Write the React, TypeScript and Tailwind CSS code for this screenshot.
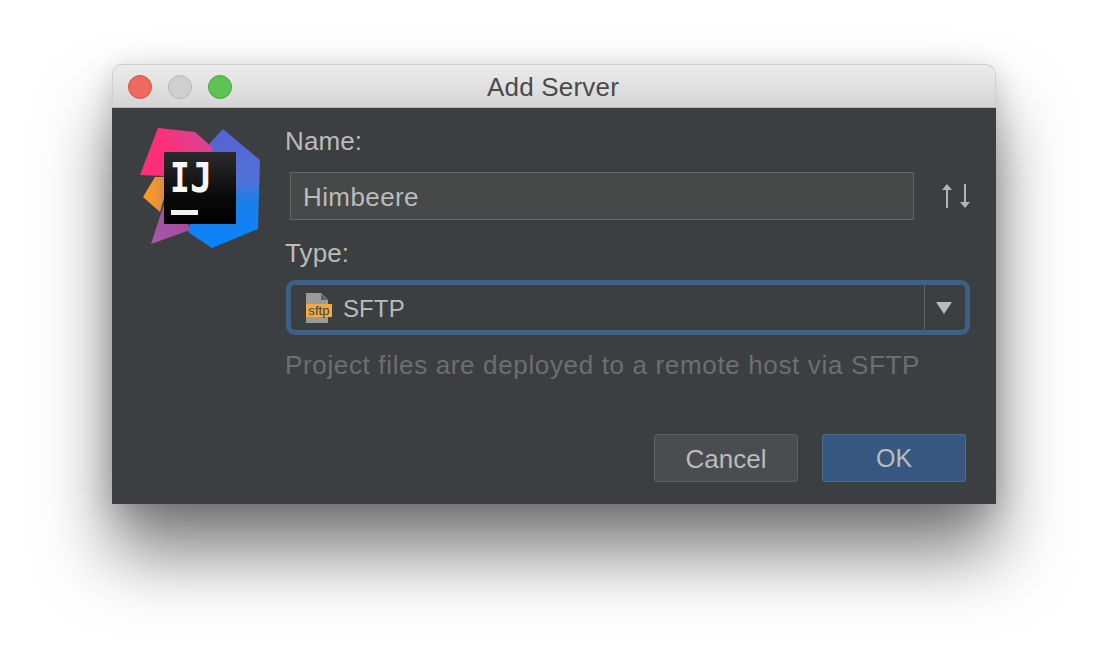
function ProductLogo() {
  return (
    <svg width="121" height="121" viewBox="0 0 121 121" className="shrink-0">
      <defs>
        <linearGradient id="pink" x1="0" y1="0.6" x2="1" y2="0.2">
          <stop offset="0.35" stopColor="#fe2f78" />
          <stop offset="1" stopColor="#d1499a" />
        </linearGradient>
        <linearGradient id="blue" x1="0.5" y1="0" x2="0.5" y2="1">
          <stop offset="0" stopColor="#5763d3" />
          <stop offset="0.45" stopColor="#4f72d8" />
          <stop offset="0.6" stopColor="#1c7fea" />
          <stop offset="1" stopColor="#0a83fb" />
        </linearGradient>
        <linearGradient id="purple" x1="0.2" y1="1" x2="0.8" y2="0">
          <stop offset="0" stopColor="#a65ba8" />
          <stop offset="1" stopColor="#a5409b" />
        </linearGradient>
        <linearGradient id="orange" x1="0" y1="0.5" x2="1" y2="0.5">
          <stop offset="0.2" stopColor="#fd9a24" />
          <stop offset="1" stopColor="#c9865a" />
        </linearGradient>
        <linearGradient id="tile" x1="0" y1="0" x2="0" y2="1">
          <stop offset="0" stopColor="#2b2b2b" />
          <stop offset="0.6" stopColor="#0a0a0a" />
          <stop offset="1" stopColor="#000000" />
        </linearGradient>
      </defs>
      <polygon points="83,1 120,32 118,101 72,120 48,104 70,15" fill="url(#blue)" />
      <polygon points="15,49 3,69 20,84 30,49" fill="url(#orange)" />
      <polygon points="23,79 11,116 50,102 40,70" fill="url(#purple)" />
      <polygon points="18,0 55,4 73,20 60,40 24,48 0,47" fill="url(#pink)" />
      <rect x="24" y="24" width="72" height="72" fill="url(#tile)" />
      <text transform="translate(30 64) scale(0.8 1)" fontFamily="'DejaVu Sans Mono', monospace" fontWeight="700" fontSize="41" fill="#f7f7f7">I</text>
      <text transform="translate(50 64) scale(0.9 1)" fontFamily="'DejaVu Sans Mono', monospace" fontWeight="700" fontSize="41" fill="#f7f7f7">J</text>
      <rect x="31" y="82" width="27" height="5" fill="#f0f0f0" />
    </svg>
  );
}

function SftpIcon() {
  return (
    <div className="relative w-[26px] h-[30px] shrink-0">
      <svg width="22" height="30" viewBox="0 0 22 30" className="absolute left-0 top-0">
        <path d="M0 0h15l7 7v23H0z" fill="#9a9a9a" />
        <path d="M15 1l6 6h-6z" fill="#5a5d5f" />
      </svg>
      <span className="absolute left-0 top-[11px] w-[26px] h-[13px] bg-[#f4a947] text-[#3c3f41] text-[13px] leading-[13px] text-center">
        sftp
      </span>
    </div>
  );
}

export default function App() {
  return (
    <div className="w-[1108px] h-[664px] bg-white pt-[64px] pl-[112px] overflow-hidden font-['Liberation_Sans',Arial,sans-serif]">
      <div className="w-[884px] h-[440px] rounded-t-[10px] shadow-[0_50px_70px_rgba(0,0,0,0.5),0_6px_30px_rgba(0,0,0,0.18)] flex flex-col">
        <div className="relative h-[44px] rounded-t-[10px] bg-gradient-to-b from-[#ececec] to-[#d5d5d5] border border-b-[#b4b4b4] border-[#cfcfcf] flex items-center justify-center shrink-0">
          <div className="absolute left-[15px] top-[10px] flex gap-[16px]">
            <span className="w-[24px] h-[24px] rounded-full bg-[#ec6a5e] border border-[#d65245]" />
            <span className="w-[24px] h-[24px] rounded-full bg-[#cfcfcf] border border-[#b9b9b9]" />
            <span className="w-[24px] h-[24px] rounded-full bg-[#5ec352] border border-[#4aa63f]" />
          </div>
          <span className="text-[26px] tracking-[0.2px] text-[#4a4a4a] leading-none mt-[2px] mr-[2px]">Add Server</span>
        </div>
        <div className="flex-1 bg-[#3c3f41] flex pl-[28px] pt-[20px]">
          <ProductLogo />
          <div className="ml-[24px] w-[692px] flex flex-col">
            <label className="text-[26px] tracking-[0.1px] leading-[28px] text-[#bbbbbb] mt-[-1px]">Name:</label>
            <div className="flex items-center mt-[17px]">
              <div className="ml-[5px] w-[624px] h-[48px] bg-[#45494a] border border-[#646464] flex items-center px-[12px] pt-[2px] text-[26px] tracking-[0.4px] text-[#bbbbbb]">
                Himbeere
              </div>
              <svg width="28" height="24" viewBox="0 0 28 24" className="ml-[28px]" fill="#b4b4b4">
                <path d="M0 6L5 0l5 6H6v18H4V6z" />
                <path d="M22 0h2v18h4l-5 6-5-6h4z" />
              </svg>
            </div>
            <label className="text-[26px] tracking-[0.1px] leading-[28px] text-[#bbbbbb] mt-[19px]">Type:</label>
            <div className="mt-[13px] ml-[1px] w-[684px] h-[55px] rounded-[9px] border-[5px] border-[#3d6185] bg-[#3c3f41] flex items-center">
              <div className="flex-1 flex items-center pl-[15px] gap-[11px] text-[24px] tracking-[0.1px] text-[#bbbbbb]">
                <SftpIcon />
                <span className="pt-[2px]">SFTP</span>
              </div>
              <div className="w-[41px] h-full border-l border-[#646464] flex items-center justify-center">
                <svg width="16" height="12" viewBox="0 0 16 12" className="mt-[1px] mr-[2px]">
                  <path d="M0 0h16l-8 12z" fill="#bbbbbb" />
                </svg>
              </div>
            </div>
            <p className="text-[26px] leading-[28px] text-[#6e6e6e] mt-[16px] tracking-[0.65px] whitespace-nowrap">
              Project files are deployed to a remote host via SFTP
            </p>
            <div className="flex justify-end gap-[24px] mt-[55px] pr-[11px]">
              <button className="w-[144px] h-[48px] rounded-[3px] bg-[#4a4d4f] border border-[#5e6060] pt-[2px] text-[26px] text-[#bbbbbb]">
                Cancel
              </button>
              <button className="w-[144px] h-[48px] rounded-[3px] bg-[#365880] border border-[#4c708c] pt-[2px] text-[25px] text-[#bbbbbb]">
                OK
              </button>
            </div>
          </div>
        </div>
      </div>
    </div>
  );
}
